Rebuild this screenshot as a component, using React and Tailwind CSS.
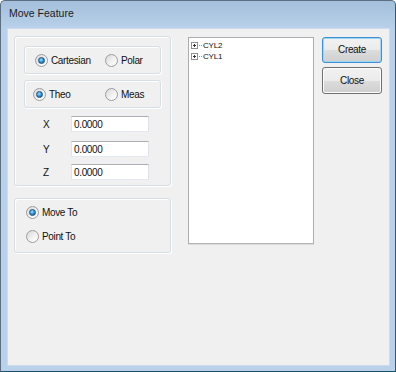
import React from "react";

function Radio({ checked }) {
  return (
    <span className="relative flex h-[13px] w-[13px] shrink-0 items-center justify-center rounded-full border border-[#9c9c9c] bg-[linear-gradient(135deg,#d8d8d8,#f4f4f4_60%,#ffffff)]">
      {checked && (
        <span className="h-[7px] w-[7px] rounded-full border border-[#1b4f80] bg-[radial-gradient(circle_at_40%_35%,#8fe0ff,#2a8fd8_55%,#0f4a8a)]" />
      )}
    </span>
  );
}

function RadioItem({ checked, label, className = "" }) {
  return (
    <div className={"flex items-center gap-[3px] " + className}>
      <Radio checked={checked} />
      <span>{label}</span>
    </div>
  );
}

function Group({ className = "", children }) {
  return (
    <div className={"rounded-[3px] border border-[#d5dfe5] shadow-[inset_1px_1px_0_#ffffff,1px_1px_0_#ffffff] " + className}>
      {children}
    </div>
  );
}

function Field({ label, className = "" }) {
  return (
    <div className={"flex items-center " + className}>
      <span className="w-[28px] pl-[28px] box-content">{label}</span>
      <div className="flex h-[16px] w-[78px] items-center border border-[#e2e3ea] border-t-[#abadb3] border-b-[#e3e9ef] bg-white pl-[2px]">
        0.0000
      </div>
    </div>
  );
}

function TreeItem({ label }) {
  return (
    <div className="flex h-[11px] items-center">
      <svg width="7" height="7" viewBox="0 0 7 7" className="shrink-0">
        <rect x="0.5" y="0.5" width="6" height="6" fill="#fff" stroke="#919191" />
        <path d="M2 3.5h3M3.5 2v3" stroke="#333" />
      </svg>
      <span className="mx-[1px] w-[3px] border-t border-dotted border-[#999]" />
      <span className="text-[8px] tracking-[-0.2px]">{label}</span>
    </div>
  );
}

export default function App() {
  return (
    <div
      className="flex h-[372px] w-[396px] flex-col rounded-t-[5px] border border-[#5c6f80] border-b-[#145468] border-r-[#2a5f72] bg-[linear-gradient(to_bottom,#a4bfdc,#b9d1ea_28px,#b9d1ea)] px-[6px] pb-[5px] text-[#111]"
      style={{ fontFamily: '"Liberation Sans", Arial, sans-serif' }}
    >
      <div className="-mx-[6px] flex h-[27px] items-center pb-[1px] pl-[8px] text-[10.5px] text-[#1b1b1b]">
        Move Feature
      </div>

      <div className="flex h-[338px] w-[383px] border border-[#cddbea] bg-[#f0f0f0] pl-[6px] pt-[7px] text-[10px] tracking-[-0.35px]">
        <div className="flex w-[157px] flex-col">
          <Group className="h-[150px] px-[9px] pt-[9px]">
            <Group className="flex h-[28px] items-center pl-[10px]">
              <RadioItem checked label="Cartesian" className="w-[70px]" />
              <RadioItem label="Polar" />
            </Group>
            <Group className="mt-[6px] flex h-[28px] items-center pl-[8px]">
              <RadioItem checked label="Theo" className="w-[72px]" />
              <RadioItem label="Meas" />
            </Group>
            <Field label="X" className="-mx-[9px] mt-[8px]" />
            <Field label="Y" className="-mx-[9px] mt-[9px]" />
            <Field label="Z" className="-mx-[9px] mt-[7px]" />
          </Group>
          <Group className="mt-[12px] flex h-[55px] flex-col pl-[11px] pt-[6px]">
            <RadioItem checked label="Move To" />
            <RadioItem label="Point To" className="mt-[9px]" />
          </Group>
        </div>

        <div className="ml-[17px] mt-[1px] h-[207px] w-[126px] border border-[#abadb3] border-b-[#b5b5b5] bg-white pl-[2px] pt-[2px] shadow-[0_1px_0_#d9d9d9]">
          <TreeItem label="CYL2" />
          <TreeItem label="CYL1" />
        </div>

        <div className="ml-[8px] mt-[1px] flex w-[60px] flex-col gap-[4px]">
          <button className="flex h-[26px] items-center justify-center rounded-[3px] border border-[#3c8fd0] bg-[linear-gradient(to_bottom,#f2f2f2,#ebebeb_50%,#dddddd_50%,#cfcfcf)] shadow-[inset_0_0_0_1px_#9fd6f4] pb-[1px]">
            Create
          </button>
          <button className="flex h-[27px] items-center justify-center rounded-[3px] border border-[#707070] bg-[linear-gradient(to_bottom,#f2f2f2,#ebebeb_50%,#dddddd_50%,#cfcfcf)] shadow-[inset_0_0_0_1px_#fcfcfc] pb-[1px]">
            Close
          </button>
        </div>
      </div>
    </div>
  );
}
